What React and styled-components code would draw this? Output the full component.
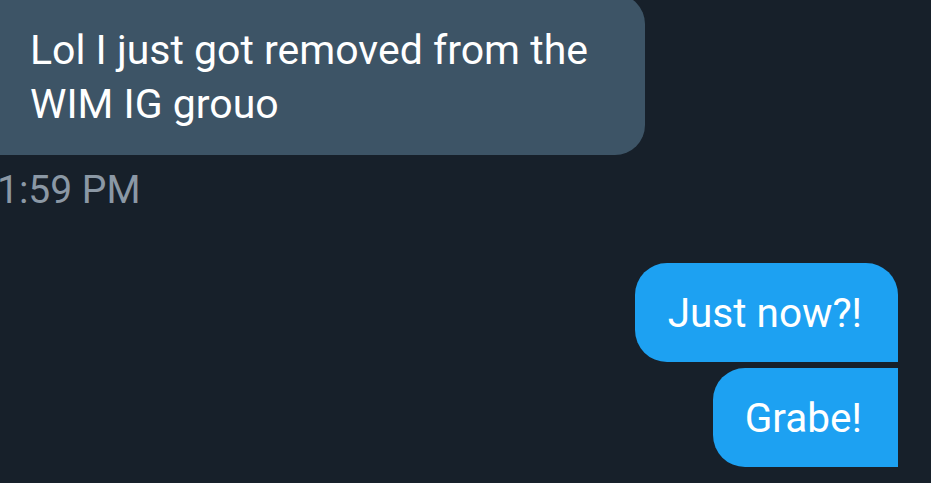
import React from 'react';
import styled, { createGlobalStyle } from 'styled-components';

const GlobalStyle = createGlobalStyle`
  html, body {
    margin: 0;
    padding: 0;
    background: #17202a;
    overflow: hidden;
  }
`;

const Screen = styled.div`
  width: 931px;
  height: 483px;
  background: #17202a;
  font-family: Roboto, "Noto Sans", sans-serif;
  display: flex;
  flex-direction: column;
  overflow: hidden;
`;

const Received = styled.div`
  align-self: flex-start;
  margin: -6px 0 0 -30px;
  width: 675px;
  box-sizing: border-box;
  padding: 29px 20px 24px 60px;
  background: #3d5466;
  border-radius: 0 30px 30px 0;
  color: #ffffff;
  font-size: 41px;
  line-height: 54px;
`;

const Stamp = styled.div`
  margin: 15px 0 0 -3px;
  color: #8b98a5;
  font-size: 39px;
  line-height: 40px;
  white-space: nowrap;
`;

const SentGroup = styled.div`
  margin-top: 53px;
  padding-right: 33px;
  display: flex;
  flex-direction: column;
  align-items: flex-end;
  gap: 6px;
`;

const Sent = styled.div`
  background: #1da1f2;
  color: #ffffff;
  font-size: 40.5px;
  line-height: 97px;
  height: 97px;
  padding: 2px 36px 0 ${p => p.$padLeft}px;
  border-radius: ${p => (p.$first ? '32px 32px 0 32px' : '32px 0 0 32px')};
`;

export default function App() {
  return (
    <Screen>
      <GlobalStyle />
      <Received>
        Lol I just got removed from the
        <br />
        WIM IG grouo
      </Received>
      <Stamp>1:59 PM</Stamp>
      <SentGroup>
        <Sent $first $padLeft={33}>Just now?!</Sent>
        <Sent $padLeft={32}>Grabe!</Sent>
      </SentGroup>
    </Screen>
  );
}
